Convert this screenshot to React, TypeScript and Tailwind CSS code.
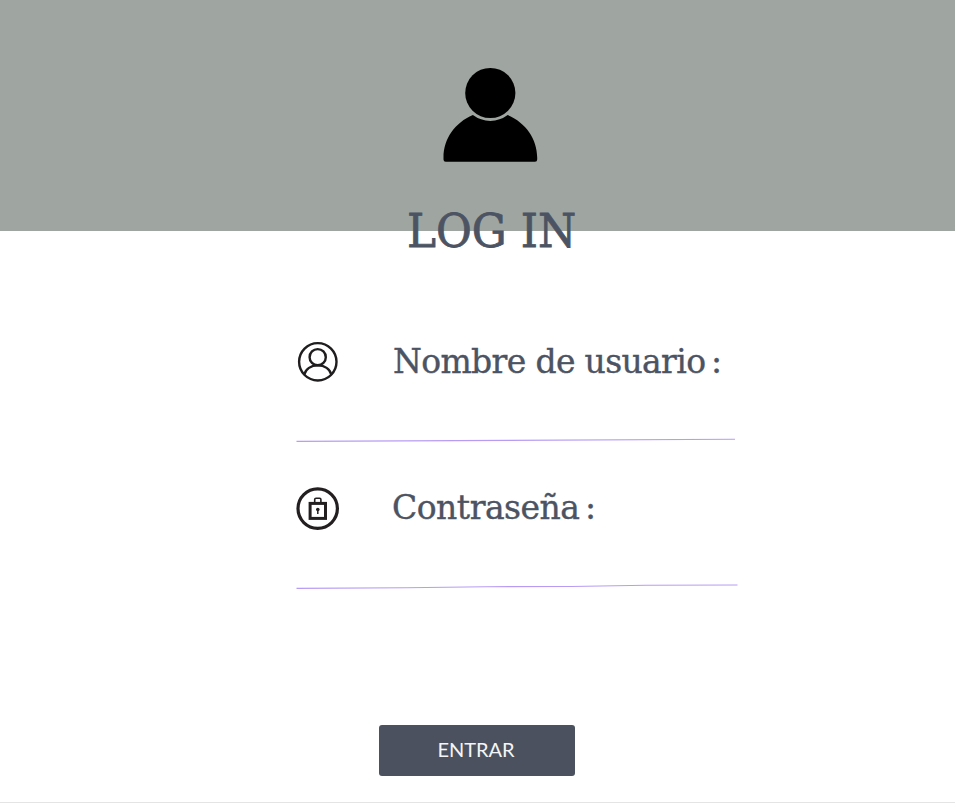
import React from "react";

function Avatar() {
  return (
    <svg className="h-[96px] w-[96px]" viewBox="0 0 96 96">
      <circle cx="48.3" cy="26" r="25.1" />
      <path d="M30.9 48.1A28.9 28.9 0 0 0 65.7 48.1C83.5 55.5 95.2 72 95.2 90.5V92.6Q95.2 94.8 93 94.8H3.7Q1.5 94.8 1.5 92.6V90.5C1.5 72 13.1 55.5 30.9 48.1Z" />
    </svg>
  );
}

function UserIcon() {
  return (
    <svg className="h-[44px] w-[44px]" viewBox="0 0 44 44" fill="none" stroke="#1f1d1e" strokeWidth="2.4">
      <circle cx="21.8" cy="21.8" r="18.7" />
      <circle cx="21.7" cy="17.2" r="8.1" />
      <path d="M8.2 34.8C9.6 29 15 25.3 21.8 25.3S34 29 35.4 34.8" />
    </svg>
  );
}

function LockIcon() {
  return (
    <svg className="h-[44px] w-[44px]" viewBox="0 0 44 44" fill="none" stroke="#231f20">
      <circle cx="21.7" cy="22.6" r="19.7" strokeWidth="3.2" />
      <rect x="14.1" y="17.4" width="15.4" height="15" strokeWidth="3" />
      <path d="M18.7 16V13.6Q18.7 12.2 20 12.2H23.6Q24.9 12.2 24.9 13.6V16" strokeWidth="1.6" />
      <circle cx="21.8" cy="23.5" r="1.8" fill="#231f20" stroke="none" />
      <path d="M21.8 24V28" strokeWidth="1.5" />
    </svg>
  );
}

export default function App() {
  return (
    <div className="flex h-[803px] w-[955px] flex-col overflow-hidden border-b border-[#e4e4e4] bg-white text-[#4c5362] [font-family:'DejaVu_Serif',serif]">
      <header className="h-[231px] shrink-0 bg-[#9fa5a0] pt-[67px] pl-[442px]">
        <Avatar />
      </header>
      <h1 className="-mt-[30px] ml-[407px] h-[60px] text-[47px] leading-[60px] whitespace-nowrap [-webkit-text-stroke:0.8px_#4c5362]">
        <span className="inline-block origin-left scale-x-[0.93]">LOG IN</span>
      </h1>
      <form className="mt-[79px] ml-[296px] flex flex-col">
        <div className="flex h-[44px] items-center">
          <UserIcon />
          <label className="ml-[53px] flex gap-[5.5px] text-[33px] leading-[44px] tracking-[-0.65px] whitespace-nowrap [-webkit-text-stroke:0.4px_#4c5362]">
            <span>Nombre de usuario</span>
            <span>:</span>
          </label>
        </div>
        <svg className="mt-[54px] h-[6px] w-[442px]" viewBox="0 0 442 6" fill="none">
          <path d="M.5 3.4L439 1.2" stroke="#b79cf3" strokeWidth="1.1" />
        </svg>
        <div className="mt-[42px] flex h-[44px] items-center">
          <LockIcon />
          <label className="ml-[52px] flex gap-[5.5px] text-[33px] leading-[44px] tracking-[-0.5px] whitespace-nowrap [-webkit-text-stroke:0.4px_#4c5362]">
            <span>Contraseña</span>
            <span>:</span>
          </label>
        </div>
        <svg className="mt-[54px] h-[6px] w-[442px]" viewBox="0 0 442 6" fill="none">
          <path d="M.5 4.4L110 3.7L190 2.7L275 2.5L350 1.2L441.5 1" stroke="#b79cf3" strokeWidth="1.1" />
        </svg>
        <button
          type="button"
          className="mt-[135px] ml-[83px] h-[51px] w-[196px] rounded-[3px] bg-[#4b515f] pr-[2px] pb-[3px] text-[20px] leading-[48px] text-[#f4f5f6] [font-family:Lato,sans-serif]"
        >
          ENTRAR
        </button>
      </form>
    </div>
  );
}
